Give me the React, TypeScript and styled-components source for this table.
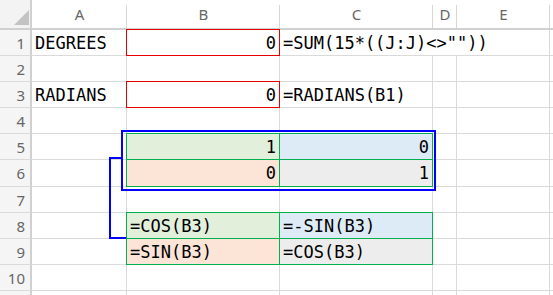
import React from 'react';
import styled, { createGlobalStyle, css } from 'styled-components';

const GlobalStyle = createGlobalStyle`
  html, body { margin: 0; padding: 0; background: #ffffff; overflow: hidden; }
  #root { width: 553px; height: 295px; overflow: hidden; }
`;

const COLS = [
  { name: 'A', width: 95 },
  { name: 'B', width: 153 },
  { name: 'C', width: 153 },
  { name: 'D', width: 24 },
  { name: 'E', width: 93 },
  { name: 'F', width: 93 },
];

const ROW_HEIGHTS = [26, 26, 26, 26, 26, 27, 26, 26, 26, 26, 26];
const VISIBLE_ROW_LABELS = 10;

const FILL = {
  green: '#e2efda',
  blue: '#ddebf7',
  peach: '#fce4d6',
  gray: '#ededed',
};

const EDGE = {
  red: '#e80000',
  green: '#00b050',
};

type CellData = {
  text?: string;
  align?: 'left' | 'right';
  fill?: keyof typeof FILL;
  edge?: keyof typeof EDGE;
  span?: number;
};

const DATA: Record<string, CellData> = {
  A1: { text: 'DEGREES' },
  B1: { text: '0', align: 'right', edge: 'red' },
  C1: { text: '=SUM(15*((J:J)<>""))', span: 3 },
  A3: { text: 'RADIANS' },
  B3: { text: '0', align: 'right', edge: 'red' },
  C3: { text: '=RADIANS(B1)' },
  B5: { text: '1', align: 'right', fill: 'green', edge: 'green' },
  C5: { text: '0', align: 'right', fill: 'blue', edge: 'green' },
  B6: { text: '0', align: 'right', fill: 'peach', edge: 'green' },
  C6: { text: '1', align: 'right', fill: 'gray', edge: 'green' },
  B8: { text: '=COS(B3)', fill: 'green', edge: 'green' },
  C8: { text: '=-SIN(B3)', fill: 'blue', edge: 'green' },
  B9: { text: '=SIN(B3)', fill: 'peach', edge: 'green' },
  C9: { text: '=COS(B3)', fill: 'gray', edge: 'green' },
};

const Sheet = styled.div`
  position: relative;
  display: grid;
  grid-template-columns: 32px ${COLS.map((c) => `${c.width}px`).join(' ')};
  grid-template-rows: 30px ${ROW_HEIGHTS.map((h) => `${h}px`).join(' ')};
  width: 553px;
  height: 295px;
  overflow: hidden;
  background: #ffffff;
`;

const Corner = styled.div`
  box-sizing: border-box;
  background: #f3f3f3;
  border-right: 2px solid #d0d0d0;
  border-bottom: 2px solid #d0d0d0;
  display: flex;
  align-items: flex-end;
  justify-content: flex-end;
  padding: 0 1px 3px 0;
`;

const ColHeader = styled.div`
  position: relative;
  box-sizing: border-box;
  background: #ffffff;
  border-bottom: 2px solid #d0d0d0;
  font-family: "Noto Sans", "Open Sans", sans-serif;
  font-size: 15px;
  line-height: 28px;
  color: #666666;
  text-align: center;
  &::after {
    content: '';
    position: absolute;
    right: 0;
    top: 5px;
    bottom: 0;
    width: 1px;
    background: #d6d6d6;
  }
`;

const RowHeader = styled.div`
  box-sizing: border-box;
  background: #f5f5f5;
  border-right: 2px solid #d0d0d0;
  border-bottom: 1px solid #dadada;
  font-family: "Noto Sans", "Open Sans", sans-serif;
  font-size: 15px;
  line-height: 24px;
  padding: 1px 5px 0 0;
  color: #666666;
  text-align: right;
`;

const Cell = styled.div<{
  $align?: 'left' | 'right';
  $fill?: string;
  $edge?: string;
  $span?: number;
}>`
  position: relative;
  box-sizing: border-box;
  border-right: 1px solid #dadada;
  border-bottom: 1px solid #dadada;
  background: ${(p) => p.$fill ?? '#ffffff'};
  padding: 1px 3px 0;
  font-family: "DejaVu Sans Mono", "Liberation Mono", monospace;
  font-size: 17px;
  line-height: 24px;
  color: #000000;
  white-space: nowrap;
  text-align: ${(p) => p.$align ?? 'left'};
  ${(p) =>
    p.$span &&
    css`
      grid-column: span ${p.$span};
    `}
  ${(p) =>
    p.$edge &&
    css`
      &::after {
        content: '';
        position: absolute;
        left: -1px;
        top: -1px;
        right: -1px;
        bottom: -1px;
        border: 1px solid ${p.$edge};
        pointer-events: none;
        z-index: 1;
      }
    `}
`;

const SelectionBox = styled.div`
  position: absolute;
  left: 121px;
  top: 130px;
  width: 315px;
  height: 61px;
  box-sizing: border-box;
  border: 2px solid #0000ff;
  pointer-events: none;
  z-index: 2;
`;

const Overlay = styled.svg`
  position: absolute;
  left: 0;
  top: 0;
  pointer-events: none;
  z-index: 2;
`;

export default function App() {
  const cells: React.ReactNode[] = [];
  ROW_HEIGHTS.forEach((_, r) => {
    const rowNum = r + 1;
    cells.push(
      <RowHeader key={`h${rowNum}`}>
        {rowNum <= VISIBLE_ROW_LABELS ? rowNum : ''}
      </RowHeader>
    );
    let skip = 0;
    COLS.forEach((col) => {
      if (skip > 0) {
        skip -= 1;
        return;
      }
      const id = `${col.name}${rowNum}`;
      const d = DATA[id] ?? {};
      if (d.span) skip = d.span - 1;
      cells.push(
        <Cell
          key={id}
          $align={d.align}
          $fill={d.fill ? FILL[d.fill] : undefined}
          $edge={d.edge ? EDGE[d.edge] : undefined}
          $span={d.span}
        >
          {d.text}
        </Cell>
      );
    });
  });

  return (
    <>
      <GlobalStyle />
      <Sheet>
        <Corner>
          <svg width="15" height="15" viewBox="0 0 15 15">
            <polygon points="0,15 15,15 15,0" fill="#c3c3c3" />
          </svg>
        </Corner>
        {COLS.map((c) => (
          <ColHeader key={c.name}>{c.name === 'F' ? '' : c.name}</ColHeader>
        ))}
        {cells}
        <SelectionBox />
        <Overlay width="553" height="295" viewBox="0 0 553 295">
          <path
            d="M121 158 H110 V238 H126"
            fill="none"
            stroke="#0000ff"
            strokeWidth="2"
          />
        </Overlay>
      </Sheet>
    </>
  );
}
